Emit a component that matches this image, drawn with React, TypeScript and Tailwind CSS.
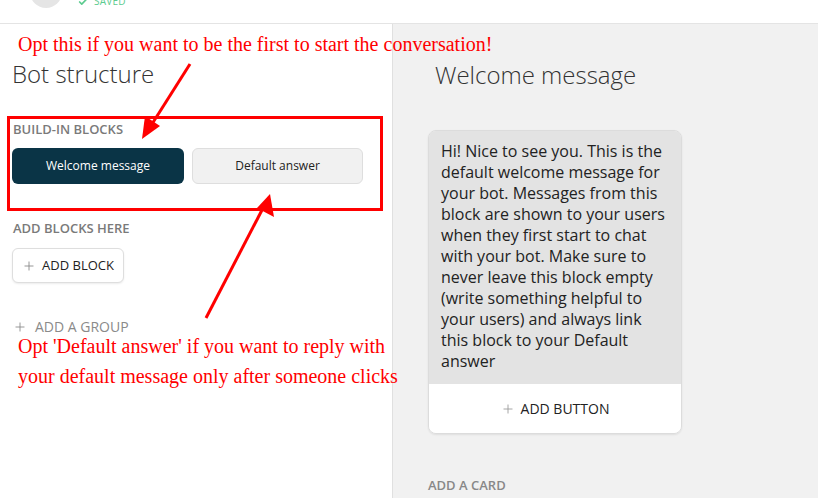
import { Check, Plus } from 'lucide-react';

const Note = ({ children, className }: { children: React.ReactNode; className: string }) => (
  <div
    className={`absolute text-[#ff0000] whitespace-nowrap ${className}`}
    style={{ fontFamily: '"Liberation Serif", "Times New Roman", serif' }}
  >
    {children}
  </div>
);

const App = () => {
  const welcome =
    'Hi! Nice to see you. This is the default welcome message for your bot. Messages from this block are shown to your users when they first start to chat with your bot. Make sure to never leave this block empty (write something helpful to your users) and always link this block to your Default answer';

  return (
    <div
      className="relative w-[818px] h-[498px] overflow-hidden bg-white flex flex-col text-[#222]"
      style={{ fontFamily: '"Open Sans", "Noto Sans", sans-serif' }}
    >
      {/* header */}
      <header className="h-[24px] shrink-0 border-b border-[#e4e4e4] relative">
        <div className="absolute left-[30px] top-[-24px] w-[32px] h-[32px] rounded-full bg-[#e5e5e5]" />
        <div className="absolute left-[78px] top-[-6px] flex items-center gap-[6px] text-[#5ccb8f]">
          <Check size={10} strokeWidth={4} />
          <span className="text-[10px] tracking-wide">SAVED</span>
        </div>
      </header>

      <div className="flex flex-1 min-h-0">
        {/* left: bot structure */}
        <section className="w-[392px] shrink-0 pl-[12px] pt-[34px]">
          <h1 className="text-[24px] leading-[32px] font-light text-[#333]">Bot structure</h1>

          <div className="mt-[31px] text-[13px] leading-[16px] font-semibold text-[#7a7a7a] pl-px">BUILD-IN BLOCKS</div>
          <div className="mt-[11px] flex gap-[8px]">
            <button className="w-[172px] h-[36px] rounded-[6px] bg-[#0a3446] text-white text-[12px]">Welcome message</button>
            <button className="w-[171px] h-[36px] rounded-[6px] bg-[#f1f1f1] border border-[#dedede] text-[12px] text-[#222]">
              Default answer
            </button>
          </div>

          <div className="mt-[36px] text-[13px] leading-[16px] font-semibold text-[#7a7a7a] pl-px">ADD BLOCKS HERE</div>
          <button className="mt-[12px] w-[112px] h-[35px] rounded-[6px] bg-white border border-[#dedede] shadow-[0_1px_2px_rgba(0,0,0,0.08)] flex items-center justify-center gap-[6px] text-[13px] text-[#222]">
            <Plus size={14} strokeWidth={1.5} className="text-[#888]" />
            ADD BLOCK
          </button>

          <div className="mt-[34px] flex items-center gap-[8px] text-[14px] leading-[20px] text-[#8a8a8a] pl-[1px]">
            <Plus size={14} strokeWidth={1.5} />
            ADD A GROUP
          </div>
        </section>

        {/* right: welcome message */}
        <section className="flex-1 bg-[#f1f1f1] border-l border-[#e0e0e0] pl-[35px] pt-[35px]">
          <h2 className="ml-[7px] text-[24px] leading-[32px] font-light text-[#333]">Welcome message</h2>
          <div className="mt-[39px] w-[254px] rounded-[8px] overflow-hidden border border-[#dcdcdc] shadow-[0_1px_2px_rgba(0,0,0,0.08)]">
            <p className="bg-[#e3e3e3] px-[12px] pt-[10px] pb-[12px] text-[16px] leading-[21px] text-[#222]">{welcome}</p>
            <div className="bg-white h-[49px] flex items-center justify-center gap-[6px] text-[14px] text-[#222]">
              <Plus size={14} strokeWidth={1.5} className="text-[#999]" />
              ADD BUTTON
            </div>
          </div>
          <div className="mt-[43px] text-[13px] leading-[16px] font-semibold text-[#888]">ADD A CARD</div>
        </section>
      </div>

      {/* annotations */}
      <div className="absolute left-[7px] top-[116px] w-[376px] h-[95px] border-[3px] border-[#ff0000]" />
      <Note className="left-[18px] top-[31px] text-[20px] leading-[26px]">
        Opt this if you want to be the first to start the conversation!
      </Note>
      <Note className="left-[18px] top-[331px] text-[20px] leading-[30px]">
        Opt 'Default answer' if you want to reply with
        <br />
        your default message only after someone clicks
      </Note>
      <svg className="absolute left-0 top-0" width="818" height="498">
        <line x1="190" y1="64" x2="152" y2="124" stroke="#ff0000" strokeWidth="3" />
        <polygon points="142,139 145,116 160,126" fill="#ff0000" />
        <line x1="206" y1="318" x2="262" y2="210" stroke="#ff0000" strokeWidth="3" />
        <polygon points="270,194 274,217 257,208" fill="#ff0000" />
      </svg>
    </div>
  );
};

export default App;
